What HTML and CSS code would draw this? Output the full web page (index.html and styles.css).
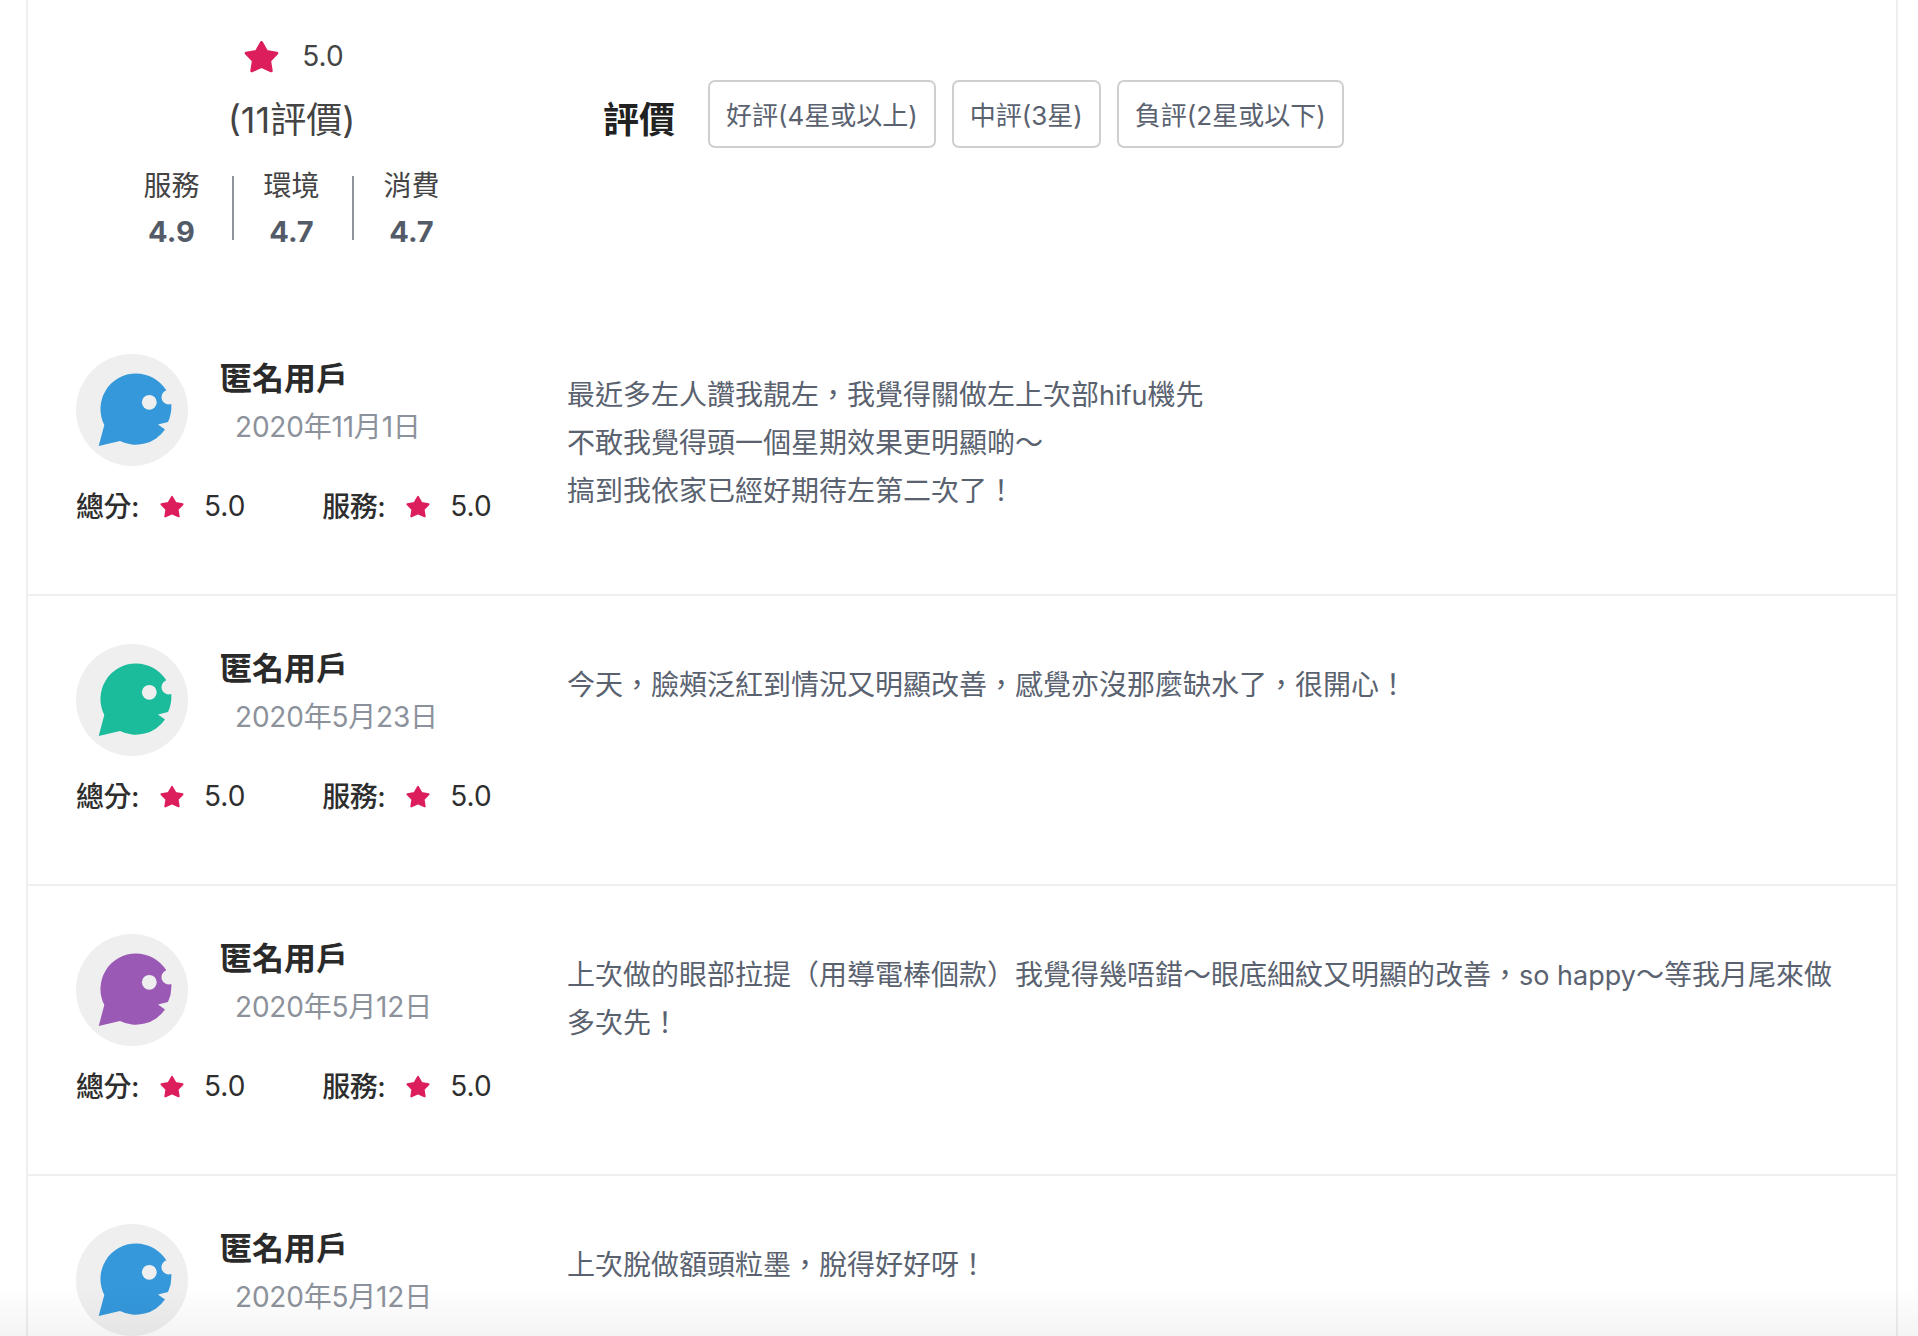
FILE: index.html
```html
<!DOCTYPE html>
<html lang="zh-Hant">
<head>
<meta charset="utf-8">
<title>評價</title>
<link rel="stylesheet" href="styles.css">
</head>
<body>
<svg class="defs" width="0" height="0" aria-hidden="true">
  <defs>
    <symbol id="star" viewBox="0 0 35 33"><path d="M17.5 2.5 L22.6 11.4 L32.8 13.2 L25.6 20.7 L27.2 30.8 L17.5 26.3 L7.8 30.8 L9.4 20.7 L2.2 13.2 L12.4 11.4 Z" fill="#dc1e5c" stroke="#dc1e5c" stroke-width="3" stroke-linejoin="round"/></symbol>
    <symbol id="bubble" viewBox="0 0 112 112"><path fill="currentColor" d="M22.7 92 L28.3 71.1 A35.6 35.6 0 0 1 60 19.4 A35.6 35.6 0 0 1 90.3 36.3 A6.5 6.5 0 0 0 95.3 50 A37 37 0 0 1 92 68 L82 70.5 L89 75.5 A35.6 35.6 0 0 1 44 87 Z"/><circle cx="73.3" cy="48.3" r="7.4" fill="#efefef"/></symbol>
  </defs>
</svg>
<main class="card">
  <section class="top">
    <div class="summary">
      <div class="overall"><svg class="star-lg"><use href="#star"/></svg><span>5.0</span></div>
      <div class="count">(11評價)</div>
      <div class="metrics">
        <div class="metric"><span class="metric-label">服務</span><strong>4.9</strong></div>
        <div class="metric"><span class="metric-label">環境</span><strong>4.7</strong></div>
        <div class="metric"><span class="metric-label">消費</span><strong>4.7</strong></div>
      </div>
    </div>
    <div class="filter">
      <h2>評價</h2>
      <button class="chip">好評(4星或以上)</button>
      <button class="chip">中評(3星)</button>
      <button class="chip">負評(2星或以下)</button>
    </div>
  </section>

  <article class="review">
    <div class="who">
      <div class="person">
        <div class="avatar blue"><svg><use href="#bubble"/></svg></div>
        <div class="names"><div class="name">匿名用戶</div><div class="date">2020年11月1日</div></div>
      </div>
      <div class="scores">
        <div class="score"><b>總分:</b><svg class="star-sm"><use href="#star"/></svg><span>5.0</span></div>
        <div class="score"><b>服務:</b><svg class="star-sm"><use href="#star"/></svg><span>5.0</span></div>
      </div>
    </div>
    <p class="body">最近多左人讚我靚左，我覺得關做左上次部<span class="latin">hifu</span>機先<br>不敢我覺得頭一個星期效果更明顯啲～<br>搞到我依家已經好期待左第二次了！</p>
  </article>

  <article class="review">
    <div class="who">
      <div class="person">
        <div class="avatar green"><svg><use href="#bubble"/></svg></div>
        <div class="names"><div class="name">匿名用戶</div><div class="date">2020年5月23日</div></div>
      </div>
      <div class="scores">
        <div class="score"><b>總分:</b><svg class="star-sm"><use href="#star"/></svg><span>5.0</span></div>
        <div class="score"><b>服務:</b><svg class="star-sm"><use href="#star"/></svg><span>5.0</span></div>
      </div>
    </div>
    <p class="body">今天，臉頰泛紅到情況又明顯改善，感覺亦沒那麼缺水了，很開心！</p>
  </article>

  <article class="review">
    <div class="who">
      <div class="person">
        <div class="avatar purple"><svg><use href="#bubble"/></svg></div>
        <div class="names"><div class="name">匿名用戶</div><div class="date">2020年5月12日</div></div>
      </div>
      <div class="scores">
        <div class="score"><b>總分:</b><svg class="star-sm"><use href="#star"/></svg><span>5.0</span></div>
        <div class="score"><b>服務:</b><svg class="star-sm"><use href="#star"/></svg><span>5.0</span></div>
      </div>
    </div>
    <p class="body">上次做的眼部拉提（用導電棒個款）我覺得幾唔錯～眼底細紋又明顯的改善，<span class="latin">so happy</span>～等我月尾來做<br>多次先！</p>
  </article>

  <article class="review">
    <div class="who">
      <div class="person">
        <div class="avatar blue"><svg><use href="#bubble"/></svg></div>
        <div class="names"><div class="name">匿名用戶</div><div class="date">2020年5月12日</div></div>
      </div>
    </div>
    <p class="body">上次脫做額頭粒墨，脫得好好呀！</p>
  </article>
</main>
<div class="fade"></div>
</body>
</html>
```
FILE: styles.css
```css
* { box-sizing: border-box; }
html, body { margin: 0; height: 1336px; overflow: hidden; background: #fff; }
body {
  font-family: Inter, "Noto Sans CJK TC", sans-serif;
  color: #333;
  position: relative;
}
.defs { position: absolute; }
.card {
  width: 1872px;
  margin-left: 26px;
  border-left: 2px solid #efefef;
  border-right: 2px solid #efefef;
  height: 1336px;
  overflow: hidden;
}
.top {
  height: 306px;
  display: flex;
  align-items: flex-start;
}
.summary {
  width: 479px;
  padding-left: 48px;
  padding-top: 36px;
  display: flex;
  flex-direction: column;
  align-items: center;
}
.overall {
  display: flex;
  align-items: center;
  gap: 23px;
  height: 40px;
  font-size: 28px;
  color: #444;
  margin-left: 5px;
}
.star-lg { width: 35px; height: 33px; }
.count {
  font-size: 36px;
  line-height: 48px;
  margin-top: 20px;
  color: #444;
}
.metrics { display: flex; margin-top: 19px; }
.metric {
  width: 120px;
  display: flex;
  flex-direction: column;
  align-items: center;
  position: relative;
}
.metric + .metric::before {
  content: "";
  position: absolute;
  left: 0;
  top: 13px;
  width: 2px;
  height: 64px;
  background: #8e939c;
}
.metric-label { font-size: 28px; line-height: 47px; color: #444; }
.metric strong { font-size: 29px; line-height: 44px; color: #535b68; font-weight: 700; }
.filter {
  display: flex;
  align-items: flex-start;
  margin-top: 80px;
  gap: 16px;
  margin-left: 96px;
}
.filter h2 {
  margin: 7px 17px 0 0;
  font-size: 36px;
  font-weight: 700;
  color: #222;
  line-height: 67px;
}
.chip {
  height: 68px;
  padding: 0 16px 2px;
  font: inherit;
  font-size: 26px;
  color: #5a6270;
  background: #fff;
  border: 2px solid #cfcfcf;
  border-radius: 7px;
}
.review {
  height: 290px;
  padding: 48px 48px 0 48px;
  border-bottom: 2px solid #efefef;
  display: flex;
}
.review:last-child { height: 160px; border-bottom: 0; }
.who { width: 491px; flex: none; }
.person { display: flex; }
.avatar {
  width: 112px;
  height: 112px;
  border-radius: 50%;
  background: #efefef;
  flex: none;
}
.avatar svg { width: 112px; height: 112px; display: block; }
.blue { color: #3498db; }
.green { color: #1abc9c; }
.purple { color: #9b59b6; }
.names { margin-left: 32px; }
.name { font-size: 32px; line-height: 48px; font-weight: 700; color: #2a2a2a; padding-top: 1px; }
.date { font-size: 28px; line-height: 49px; color: #8c929b; margin-left: 15px; letter-spacing: -0.2px; }
.scores { display: flex; margin-top: 16px; gap: 77px; }
.score { display: flex; align-items: center; height: 48px; font-size: 28px; color: #2e2e2e; }
.score b { font-weight: 500; width: 63px; white-space: nowrap; letter-spacing: -0.5px; padding-bottom: 2px; }
.star-sm { width: 24px; height: 23px; margin: 0 20px 0 21px; }
.body {
  margin: 17px 0 0;
  font-size: 28px;
  line-height: 48px;
  color: #5a6270;
}
.latin { font-size: 27px; line-height: 1; }
.fade {
  position: absolute;
  left: 0;
  right: 0;
  bottom: 0;
  height: 50px;
  background: linear-gradient(to bottom, rgba(0,0,0,0), rgba(0,0,0,0.045));
}
```
